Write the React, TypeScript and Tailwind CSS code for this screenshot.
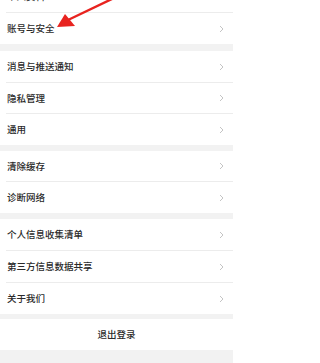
import { Fragment } from "react"

type Item = { label: string; h?: string }

const groups: Item[][] = [
  [{ label: "个人资料" }, { label: "账号与安全" }],
  [{ label: "消息与推送通知" }, { label: "隐私管理", h: "h-[30px]" }, { label: "通用" }],
  [{ label: "清除缓存", h: "h-[30px]" }, { label: "诊断网络" }],
  [{ label: "个人信息收集清单" }, { label: "第三方信息数据共享" }, { label: "关于我们" }],
]

const gaps = ["h-[7px]", "h-[6px]", "h-[6px]", "h-[5px]"]

function Chevron() {
  return (
    <svg width="5" height="8" viewBox="0 0 5 8" className="mr-[9px]">
      <path d="M1 1l3 3-3 3" fill="none" stroke="#bdbdbd" strokeWidth="0.9" />
    </svg>
  )
}

function Row({ item }: { item: Item }) {
  return (
    <div className={`flex items-center justify-between bg-white pl-[7px] ${item.h ?? "h-[31px]"}`}>
      <span className="text-[9.5px] font-medium text-[#2a2a2a]">{item.label}</span>
      <Chevron />
    </div>
  )
}

export default function App() {
  return (
    <main
      className="relative h-[363px] w-[233px] overflow-hidden bg-[#f2f2f2]"
      style={{ fontFamily: '"Noto Sans CJK SC", "Noto Sans", sans-serif' }}
    >
      <div className="-mt-[19px]">
        {groups.map((g, gi) => (
          <Fragment key={gi}>
            <div className="bg-white">
              {g.map((item, i) => (
                <Fragment key={item.label}>
                  {i > 0 && <div className="ml-[6px] h-px bg-[#ececec]" />}
                  <Row item={item} />
                </Fragment>
              ))}
            </div>
            <div className={gaps[gi]} />
          </Fragment>
        ))}
        <div className="flex h-[31px] items-center justify-center bg-white">
          <span className="text-[9.5px] font-medium text-[#2a2a2a]">退出登录</span>
        </div>
      </div>

      {/* red arrow pointing at 账号与安全 */}
      <svg className="absolute left-0 top-0" width="233" height="40" viewBox="0 0 233 40">
        <line x1="114" y1="-2" x2="68" y2="20" stroke="#e8231f" strokeWidth="2.4" strokeLinecap="round" />
        <polygon points="57,27 65,14 75,26" fill="#e8231f" />
      </svg>
    </main>
  )
}
